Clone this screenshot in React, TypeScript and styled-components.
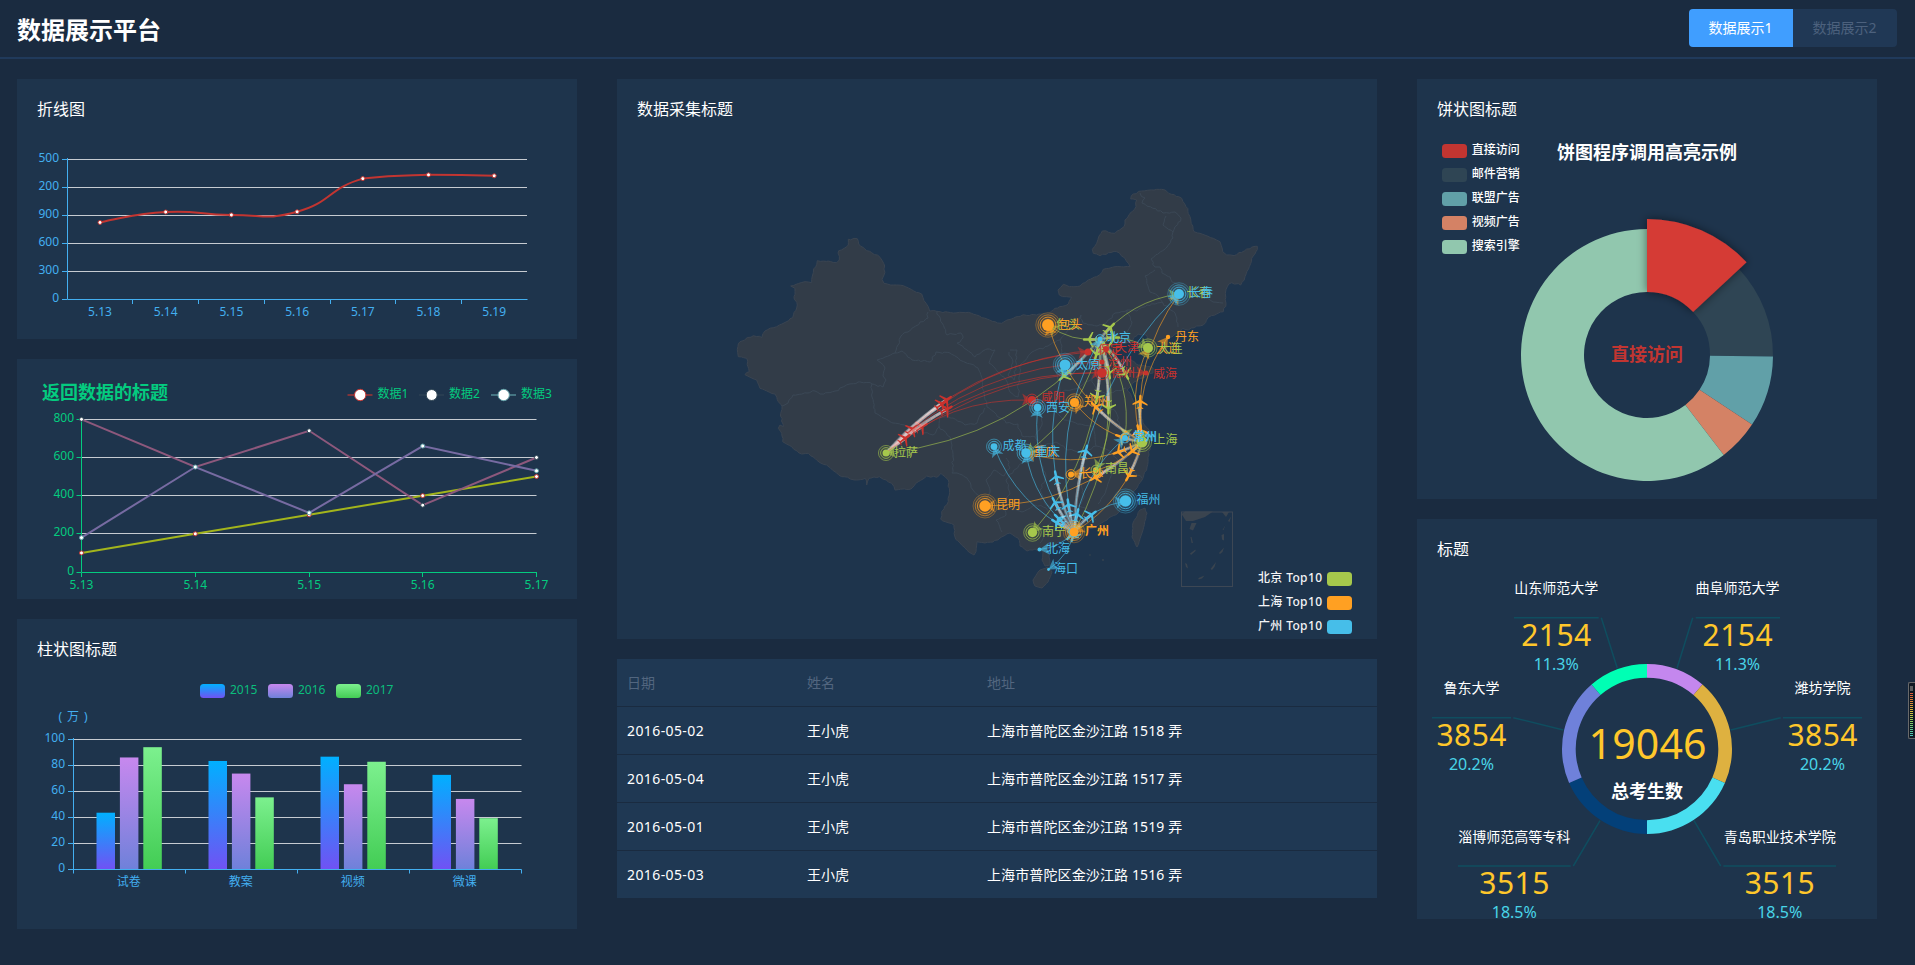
import React from "react";
import styled, { createGlobalStyle } from "styled-components";

const FONT = '"Noto Sans", "Noto Sans CJK SC", sans-serif';

const GlobalStyle = createGlobalStyle`
  *, *::before, *::after { box-sizing: border-box; }
  html, body { margin: 0; padding: 0; background: #1a2b40; }
  body { font-family: ${FONT}; color: #fff; overflow: hidden; }
`;

const Page = styled.div`
  min-height: 965px;
  background: #1a2b40;
`;

const Header = styled.header`
  display: flex;
  align-items: flex-start;
  justify-content: space-between;
  height: 59px;
  padding: 9px 18px 0 17px;
  border-bottom: 2px solid #203a5b;
`;

const Brand = styled.h1`
  margin: 0;
  font-size: 24px;
  line-height: 42px;
  font-weight: 700;
`;

const Tabs = styled.div`
  display: flex;
  border-radius: 4px;
  overflow: hidden;
`;

const Tab = styled.button<{ $active?: boolean }>`
  width: 104px;
  height: 38px;
  padding: 0 1px 0 0;
  border: 0;
  font: 400 14px/38px ${FONT};
  color: ${(p) => (p.$active ? "#fff" : "#4c617d")};
  background: ${(p) => (p.$active ? "#409eff" : "#203855")};
`;

const Main = styled.main`
  display: flex;
  align-items: flex-start;
  gap: 40px;
  padding: 20px 38px 0 17px;
`;

const Column = styled.section<{ $width: number }>`
  display: flex;
  flex-direction: column;
  flex: none;
  gap: 20px;
  width: ${(p) => p.$width}px;
`;

const Panel = styled.article<{ $height: number }>`
  display: flex;
  flex-direction: column;
  height: ${(p) => p.$height}px;
  overflow: hidden;
  background: #1e344c;
`;

const PanelTitle = styled.h2`
  flex: none;
  margin: 20px 20px 0;
  height: 20px;
  font-size: 16px;
  line-height: 20px;
  font-weight: 400;
`;

const Chart = styled.svg`
  display: block;
  flex: none;
  font-family: ${FONT};
`;

const Table = styled.div`
  display: flex;
  flex-direction: column;
  height: 239px;
  overflow: hidden;
`;

const Row = styled.div<{ $head?: boolean }>`
  display: grid;
  grid-template-columns: 180px 180px 1fr;
  flex: none;
  height: 48px;
  border-bottom: 1px solid #1a2b40;
  background: #1f3853;
  font-size: 14px;
  line-height: 47px;
  color: ${(p) => (p.$head ? "#52667f" : "#fff")};
`;

const Cell = styled.span<{ $spacing?: number }>`
  padding-left: 10px;
  letter-spacing: ${(p) => p.$spacing ?? 0}px;
`;

const Meter = styled.aside`
  position: fixed;
  right: 0;
  top: 682px;
  display: flex;
  flex-direction: column;
  gap: 1px;
  width: 7px;
  height: 57px;
  padding: 3px 1px 1px 1px;
  border: 1px solid #68696b;
  border-right: 0;
  border-radius: 2px 0 0 2px;
  background: #101923;
`;

const MeterCap = styled.i`
  flex: none;
  height: 5px;
  width: 3px;
  background: #5d5f62;
`;

const MeterBars = styled.i`
  flex: 1;
  width: 3px;
  background: repeating-linear-gradient(#101923 0 1px, transparent 1px 2px),
    linear-gradient(#e4553c, #d9893a 22%, #d5c53c 45%, #83cf63 68%, #41c4c4);
`;

/* Text placed by the vertical centre of its glyphs. */
const Label = ({
  x,
  cy,
  size = 12,
  fill,
  anchor = "start",
  weight = 400,
  length,
  children,
}: {
  x: number;
  cy: number;
  size?: number;
  fill: string;
  anchor?: "start" | "middle" | "end";
  weight?: number;
  length?: number;
  children: React.ReactNode;
}) => (
  <text x={x} y={cy + size * 0.37} fontSize={size} fill={fill} textAnchor={anchor} fontWeight={weight} textLength={length}>
    {children}
  </text>
);

type Pt = [number, number];

const BLUE = "#43aff0";
const GREEN = "#04cb7f";
const GRID = "#c6cbd1";

/* Smooth curve whose control points stay inside the vertical range of the data. */
const smoothPath = (pts: Pt[], k = 0.5) => {
  const before: Pt[] = [];
  const after: Pt[] = [];
  const ys = pts.map((p) => p[1]);
  const lo = Math.min(...ys);
  const hi = Math.max(...ys);
  const clamp = (y: number) => Math.min(hi, Math.max(lo, y));
  pts.forEach((p, i) => {
    const a = pts[i - 1];
    const b = pts[i + 1];
    if (!a || !b) {
      before.push(p);
      after.push(p);
      return;
    }
    const d1 = Math.hypot(p[0] - a[0], p[1] - a[1]);
    const d2 = Math.hypot(b[0] - p[0], b[1] - p[1]);
    const r = d2 / (d1 + d2);
    const v: Pt = [(b[0] - a[0]) * k, (b[1] - a[1]) * k];
    before.push([p[0] - v[0] * (1 - r), clamp(p[1] - v[1] * (1 - r))]);
    after.push([p[0] + v[0] * r, clamp(p[1] + v[1] * r)]);
  });
  return pts.map((p, i) => (i ? `C${after[i - 1]} ${before[i]} ${p}` : `M${p}`)).join("");
};

const VisitsChart = () => {
  const values = [820, 932, 901, 934, 1290, 1330, 1320];
  const pts = values.map((v, i): Pt => [100 + i * 65.7, 299 - (v * 140) / 1500]);
  return (
    <Chart width="560" height="220" viewBox="17 119 560 220">
      {["500", "200", "900", "600", "300", "0"].map((t, i) => {
        const y = 159.5 + i * 28;
        return (
          <g key={t}>
            {i < 5 && <path d={`M67 ${y}H527`} stroke={GRID} />}
            <path d={`M62 ${y}H67`} stroke={BLUE} />
            <Label x={59} cy={y - 2} fill={BLUE} anchor="end">{t}</Label>
          </g>
        );
      })}
      <path d="M67.5 158V299.5H527.5" stroke={BLUE} fill="none" />
      {[132.5, 198.5, 264.5, 330.5, 395.5, 461.5].map((x) => (
        <path key={x} d={`M${x} 300V304`} stroke={BLUE} />
      ))}
      {pts.map(([x], i) => (
        <Label key={i} x={x} cy={311.7} fill={BLUE} anchor="middle">{`5.${13 + i}`}</Label>
      ))}
      <path d={smoothPath(pts)} stroke="#c23531" strokeWidth="2" fill="none" />
      {pts.map(([x, y], i) => (
        <circle key={i} cx={x} cy={y} r="2" fill="#fff" stroke="#c23531" />
      ))}
    </Chart>
  );
};

const trends = [
  { name: "数据1", values: [100, 200, 300, 400, 500], line: "#a3b51c", dot: "#c23531", lx: 347.5, r: 6.2 },
  { name: "数据2", values: [800, 550, 740, 350, 600], line: "#8d587c", dot: "#2f4554", lx: 419, r: 6 },
  { name: "数据3", values: [180, 550, 310, 660, 530], line: "#776ba2", dot: "#61a0a8", lx: 491, r: 6.2 },
];

const TrendChart = () => {
  const xs = [81.5, 195.3, 309.2, 422.7, 536.5];
  const toY = (v: number) => 572 - (v * 152.7) / 800;
  return (
    <Chart width="560" height="240" viewBox="17 359 560 240">
      <Label x={42} cy={392.3} size={18} weight={700} fill={GREEN}>返回数据的标题</Label>
      {trends.map((s) => (
        <g key={s.name}>
          <path d={`M${s.lx} 395H${s.lx + 25}`} stroke={s.dot} strokeWidth="1.5" opacity="0.8" />
          <circle cx={s.lx + 12.7} cy="395" r={s.r - 0.5} fill="#fff" stroke={s.dot} />
          <Label x={s.lx + 30} cy={393.5} fill={GREEN}>{s.name}</Label>
        </g>
      ))}
      {[419.5, 457.5, 495.5, 533.5, 572.5].map((y, i) => (
        <g key={y}>
          {i < 4 && <path d={`M82 ${y}H536.5`} stroke={GRID} />}
          <path d={`M76.5 ${y}H81`} stroke={GREEN} />
          <Label x={74} cy={y - 2} fill={GREEN} anchor="end">{800 - i * 200}</Label>
        </g>
      ))}
      <path d="M81.5 419V572.5H537" stroke={GREEN} fill="none" />
      {xs.map((x, i) => (
        <g key={x}>
          <path d={`M${Math.floor(x) + 0.5} 573V577`} stroke={GREEN} />
          <Label x={x} cy={584.7} fill={GREEN} anchor="middle">{`5.${13 + i}`}</Label>
        </g>
      ))}
      {trends.map((s) => (
        <g key={s.name}>
          <polyline points={s.values.map((v, i) => `${xs[i]},${toY(v)}`).join(" ")} fill="none" stroke={s.line} strokeWidth="2" />
          {s.values.map((v, i) => (
            <circle key={i} cx={xs[i]} cy={toY(v)} r="2" fill="#fff" stroke={s.dot} />
          ))}
        </g>
      ))}
    </Chart>
  );
};

const barSeries = [
  { name: "2015", from: "#00b0ff", to: "#7052f4", values: [43.3, 83.1, 86.4, 72.4], lx: 200 },
  { name: "2016", from: "#c788ee", to: "#6f81da", values: [85.8, 73.4, 65.2, 53.9], lx: 268 },
  { name: "2017", from: "#7cf08e", to: "#43cd55", values: [93.7, 55.1, 82.5, 39.1], lx: 336 },
];

const BarChart = () => (
  <Chart width="560" height="270" viewBox="17 659 560 270">
    <defs>
      {barSeries.map((s) => (
        <linearGradient key={s.name} id={`bar${s.name}`} x1="0" y1="0" x2="0" y2="1">
          <stop offset="0" stopColor={s.from} />
          <stop offset="1" stopColor={s.to} />
        </linearGradient>
      ))}
    </defs>
    {barSeries.map((s) => (
      <g key={s.name}>
        <rect x={s.lx} y="684" width="25" height="14" rx="3.5" fill={`url(#bar${s.name})`} />
        <Label x={s.lx + 30} cy={689.7} fill="#0bbd7c">{s.name}</Label>
      </g>
    ))}
    <Label x={58.5} cy={716.7} fill={BLUE} length={29}>( 万 )</Label>
    {[100, 80, 60, 40, 20, 0].map((v, i) => {
      const y = 739.5 + i * 26;
      return (
        <g key={v}>
          {v > 0 && <path d={`M74 ${y}H521.5`} stroke={GRID} />}
          <path d={`M68 ${y}H73`} stroke={BLUE} />
          <Label x={65} cy={y - 2} fill={BLUE} anchor="end">{v}</Label>
        </g>
      );
    })}
    {barSeries.map((s, k) =>
      s.values.map((v, i) => (
        <rect key={s.name + i} x={96.5 + k * 23.4 + i * 112} y={869 - v * 1.3} width="18.5" height={v * 1.3} fill={`url(#bar${s.name})`} />
      ))
    )}
    <path d="M73.5 738V873.5M73.5 869.5H521.5V873.5M185.5 870V873.5M297.5 870V873.5M409.5 870V873.5" stroke={BLUE} fill="none" />
    {["试卷", "教案", "视频", "微课"].map((t, i) => (
      <Label key={t} x={128.8 + i * 112} cy={881.7} fill={BLUE} anchor="middle">{t}</Label>
    ))}
  </Chart>
);

/* ---------- map ---------- */

const mainland: number[] = [
  848.3, 239.3, 857.3, 238.7, 858.7, 244, 866.7, 250.7, 871.7, 252.7, 880, 257.3, 884.7, 266, 884, 275, 882, 279.3, 884, 283.3,
  893.3, 285, 903.3, 285.7, 913.3, 290.7, 921.7, 294, 924, 300.7, 928.3, 306.7, 929.7, 311, 940, 311.7, 953.3, 313, 968.3, 312.3,
  976.7, 315, 981.7, 317.7, 995, 321.7, 1001.7, 323.3, 1013.3, 318.3, 1023.3, 314.7, 1036.7, 315, 1048.3, 314, 1055, 308.3,
  1068.3, 304, 1071.7, 297.3, 1066.7, 296.7, 1059.3, 295, 1058, 290, 1063.3, 284.3, 1069.3, 286.7, 1080, 286, 1088.3, 280,
  1096.7, 276.7, 1103.3, 269.3, 1115, 266.7, 1130, 266.7, 1125, 258.3, 1116.7, 251.7, 1108.3, 252.7, 1100, 255.7, 1093.3, 253.3,
  1092.3, 249.3, 1096.7, 243.3, 1099, 236, 1102.3, 231, 1115, 233.3, 1124, 226.7, 1125, 220, 1130, 213.3, 1136, 206.7, 1136.7, 200,
  1130.7, 199, 1133.3, 194, 1141.7, 191, 1156.7, 189.3, 1165, 190, 1171.7, 194.3, 1181.7, 198.3, 1186, 206.7, 1190, 216.7,
  1194, 231.7, 1200, 233.3, 1213.3, 238.3, 1220, 241.7, 1222.7, 251.7, 1226.7, 255, 1236.7, 254.7, 1246.7, 249, 1257.3, 246.3,
  1256, 251.7, 1251.7, 258.3, 1249.3, 266.7, 1245, 276.7, 1240.7, 285, 1231.7, 282.7, 1227.3, 286.7, 1225.3, 293.3, 1226, 303.3,
  1223.3, 311.7, 1216.7, 314, 1208.3, 317.3, 1203.3, 325, 1196.7, 326, 1188.3, 330, 1182.7, 328.3, 1180, 331.7, 1168, 339,
  1157, 346, 1147, 354, 1143, 353, 1148, 343, 1146, 335, 1138, 334, 1131, 342, 1121, 345, 1115, 351, 1116, 358, 1122, 362,
  1130, 359, 1136, 364, 1145, 366, 1153, 368, 1153, 373, 1143, 378, 1134, 382, 1127, 390, 1133, 400, 1140, 412, 1143, 423,
  1151, 432, 1148, 438, 1141, 442, 1150, 446, 1149, 455, 1147, 467, 1142, 480, 1135, 490, 1127, 503, 1118, 513, 1107, 520,
  1093, 528, 1080, 534, 1068, 539, 1057, 543, 1048, 548, 1049, 557, 1050, 565, 1045, 566, 1042, 560, 1043, 552, 1035, 549,
  1027, 551, 1020, 546, 1018, 538, 1010, 533, 1000, 538, 993, 542, 985, 543, 977, 541.7, 976, 551.7, 974, 555, 966.7, 550,
  960, 543, 955, 537, 954, 525, 948, 522.7, 940.7, 519, 941.7, 511.7, 946.7, 505, 949.3, 495, 948.3, 480, 945, 476.7,
  940.7, 473.3, 936.7, 477.3, 926.7, 476, 918.3, 481.7, 910, 489.3, 895, 490, 891.7, 483.3, 883.3, 479.3, 879.3, 476.7,
  869, 478.3, 866.7, 485, 865.3, 478.3, 856.7, 480, 841.7, 476.7, 835, 471.7, 826.7, 465, 820, 462.7, 808.3, 453.3, 801.7, 454,
  791.7, 446.7, 782.7, 441.7, 781.7, 433.3, 778.3, 428.3, 780, 425, 783.3, 426.7, 780.7, 413.3, 782, 406.7, 778.3, 401.7,
  775, 394, 760, 388.3, 756.7, 380, 745, 374.7, 749.3, 371.7, 746.7, 358.3, 738.3, 356.7, 737.3, 349.3, 740, 341.7, 753.3, 335.7,
  761.7, 337.7, 765, 331, 776.7, 326.7, 792.7, 317.7, 797.3, 305, 794, 296.7, 795, 288.3, 790.7, 286, 805, 281.7, 811.7, 282.7,
  813.3, 272.7, 817.3, 260.7, 836.7, 262.7, 839.3, 260, 838.7, 250.7, 848.3, 245,
];
const hainan = [1035, 577, 1040, 570, 1048, 567, 1052, 572, 1048, 582, 1042, 588, 1035, 586, 1033, 580];
const taiwan = [1145, 508, 1147, 513, 1142, 533, 1137, 547, 1132, 537, 1133, 523, 1140, 510];

const borders: number[][] = [
  [782, 406, 788, 403, 793, 395, 807, 393, 815, 391, 820, 394, 835, 391, 845, 386, 858, 382, 872, 384, 883, 387, 886, 380, 883, 376, 885, 368, 881, 363, 877, 360, 895, 353, 898, 345, 901, 336, 908, 332, 920, 322, 928, 318, 928, 312],
  [937, 311, 942, 323, 947, 335, 961, 333, 963, 338, 957, 343, 967, 350, 975, 357, 987, 349, 995, 350, 989, 363, 997, 371, 1006, 380, 1010, 392, 1018, 397],
  [895, 353, 902, 351, 912, 360, 930, 362, 936, 352, 950, 353, 962, 361, 978, 368, 983, 380, 982, 388, 987, 407, 994, 412, 1006, 423, 1018, 424],
  [872, 384, 872, 397, 875, 413, 893, 423, 907, 426, 920, 427, 923, 433, 933, 435, 939, 427, 940, 417, 953, 418, 965, 425, 977, 423, 985, 408],
  [939, 426, 950, 437, 953, 457, 952, 473, 957, 473, 967, 478, 973, 490, 984, 505, 990, 492, 986, 480, 994, 470, 1004, 476, 1010, 468, 1006, 458],
  [1018, 424, 1022, 436, 1035, 437, 1042, 446, 1036, 455, 1024, 462, 1014, 470, 1006, 480, 1010, 494, 1002, 504, 1006, 515, 996, 520, 1002, 532],
  [1010, 508, 1022, 512, 1035, 505, 1046, 508, 1052, 518, 1046, 530, 1040, 543],
  [1042, 446, 1040, 462, 1046, 476, 1040, 490, 1046, 505, 1060, 512, 1072, 505, 1086, 508, 1096, 520],
  [1080, 455, 1086, 468, 1080, 482, 1084, 498, 1078, 506],
  [1042, 446, 1056, 442, 1068, 450, 1082, 452, 1096, 446, 1108, 450, 1118, 460, 1112, 474, 1106, 490, 1098, 504],
  [1118, 460, 1130, 470, 1142, 478],
  [1035, 437, 1042, 425, 1040, 412, 1052, 408, 1064, 420, 1080, 424, 1094, 428, 1096, 446],
  [1052, 408, 1060, 392, 1056, 372, 1062, 352, 1060, 340, 1048, 346, 1032, 352, 1020, 365, 1018, 397],
  [1060, 392, 1078, 388, 1092, 378, 1100, 362, 1114, 356],
  [1092, 378, 1096, 390, 1108, 394, 1126, 388],
  [1096, 390, 1104, 404, 1116, 412, 1120, 428, 1132, 440],
  [1081, 315, 1083, 323, 1097, 326, 1106, 323, 1115, 313, 1127, 310, 1137, 311, 1147, 305, 1163, 303, 1158, 296, 1150, 292, 1148, 286, 1145, 276, 1155, 270],
  [1081, 315, 1078, 327, 1068, 330, 1060, 340],
  [1140, 193, 1145, 198, 1142, 203, 1163, 213, 1175, 212, 1181, 218, 1173, 232, 1163, 225, 1166, 216],
  [1173, 232, 1173, 238, 1167, 247, 1151, 259, 1155, 267, 1160, 267, 1162, 273, 1170, 277, 1172, 282, 1183, 287, 1200, 295, 1213, 302, 1223, 303],
  [1163, 303, 1175, 313, 1178, 327],
  [1127, 310, 1132, 322, 1126, 334, 1131, 342],
  [1009, 352, 1013, 362, 1008, 375, 1014, 380, 1017, 350, 1010, 350],
];

/* Adds small deterministic jags so that coasts and borders look surveyed. */
const rugged = (flat: number[], amp: number, closed: boolean) => {
  const pts: Pt[] = [];
  for (let i = 0; i < flat.length; i += 2) pts.push([flat[i], flat[i + 1]]);
  let seed = 7;
  const rnd = () => {
    seed = (seed * 16807) % 2147483647;
    return seed / 2147483647 - 0.5;
  };
  const out: string[] = [];
  pts.forEach((p, i) => {
    out.push(p.map((n) => n.toFixed(1)).join(","));
    const q = pts[i + 1] ?? (closed ? pts[0] : null);
    if (!q) return;
    const steps = Math.floor(Math.hypot(q[0] - p[0], q[1] - p[1]) / 2.6);
    for (let s = 1; s < steps; s++) {
      const t = s / steps;
      out.push(`${(p[0] + (q[0] - p[0]) * t + rnd() * amp).toFixed(1)},${(p[1] + (q[1] - p[1]) * t + rnd() * amp).toFixed(1)}`);
    }
  });
  return "M" + out.join("L") + (closed ? "Z" : "");
};

const LIME = "#a6c84c";
const ORANGE = "#ffa022";
const SKY = "#46bee9";
const RED = "#c9322d";

const PLANE =
  "M1705.06,1318.313v-89.254l-319.9-221.799l0.073-208.063c0.521-84.662-26.629-121.796-63.961-121.491c-37.332-0.305-64.482,36.829-63.961,121.491l0.073,208.063l-319.9,221.799v89.254l330.343-157.288l12.238,241.308l-134.449,92.931l0.531,42.034l175.125-42.917l175.125,42.917l0.531-42.034l-134.449-92.931l12.238-241.308L1705.06,1318.313z";

const at: Record<string, Pt> = {
  长春: [1179, 294], 包头: [1048, 325], 北京: [1100, 339], 丹东: [1168, 337], 大连: [1148, 348], 保定: [1088, 352],
  天津: [1106, 349], 沧州: [1102, 362], 德州: [1102, 373], 威海: [1146, 373], 太原: [1065, 365], 咸阳: [1032, 400],
  西安: [1037.6, 407.5], 郑州: [1074.5, 402.5], 常州: [1125, 438], 上海: [1142, 442], 成都: [994, 446.6],
  重庆: [1026, 453], 拉萨: [886, 453], 长沙: [1071, 474.5], 南昌: [1096, 470], 昆明: [985, 506], 福州: [1125.5, 501],
  南宁: [1032.5, 532.5], 广州: [1074, 532], 北海: [1039.5, 549.5], 海口: [1048.5, 569.5],
};

const routes: { from: string; color: string; to: [string, number][] }[] = [
  {
    from: "拉萨", color: RED,
    to: [["咸阳", 0.27], ["保定", 0.34], ["天津", 0.29], ["沧州", 0.14], ["德州", 0.31], ["威海", 0.08]],
  },
  {
    from: "北京", color: LIME,
    to: [["上海", 0.37], ["广州", 0.34], ["大连", 0.25], ["南宁", 0.27], ["南昌", 0.25], ["拉萨", 0.2], ["长春", 0.15], ["包头", 0.17], ["重庆", 0.1], ["常州", 0.1]],
  },
  {
    from: "上海", color: ORANGE,
    to: [["包头", 0.37], ["昆明", 0.33], ["广州", 0.3], ["郑州", 0.25], ["长春", 0.25], ["重庆", 0.2], ["长沙", 0.15], ["丹东", 0.09], ["大连", 0.11]],
  },
  {
    from: "广州", color: SKY,
    to: [["福州", 0.38], ["太原", 0.33], ["长春", 0.3], ["重庆", 0.2], ["西安", 0.25], ["成都", 0.15], ["常州", 0.15], ["北京", 0.13], ["北海", 0.08], ["海口", 0.06]],
  },
];

const Route = ({ a, b, t, color }: { a: Pt; b: Pt; t: number; color: string }) => {
  const c: Pt = [(a[0] + b[0]) / 2 - (a[1] - b[1]) * 0.2, (a[1] + b[1]) / 2 - (b[0] - a[0]) * 0.2];
  const pos = (u: number): Pt => [
    (1 - u) ** 2 * a[0] + 2 * u * (1 - u) * c[0] + u * u * b[0],
    (1 - u) ** 2 * a[1] + 2 * u * (1 - u) * c[1] + u * u * b[1],
  ];
  const heading = (u: number) => {
    const dx = 2 * (1 - u) * (c[0] - a[0]) + 2 * u * (b[0] - c[0]);
    const dy = 2 * (1 - u) * (c[1] - a[1]) + 2 * u * (b[1] - c[1]);
    return (Math.atan2(dy, dx) * 180) / Math.PI + 90;
  };
  const p = pos(t);
  const n = 12;
  return (
    <g>
      <path d={`M${a}Q${c} ${b}`} fill="none" stroke={color} strokeWidth="1" opacity="0.6" />
      <path d="M0 0L6.2 10L0 7.5L-6.2 10Z" fill={color} opacity="0.6" transform={`translate(${b}) rotate(${heading(1)})`} />
      {Array.from({ length: n }, (_, i) => (
        <path key={i} d={`M${pos((t * i) / n)}L${pos((t * (i + 1)) / n)}`} stroke="#fff" strokeWidth="3" opacity={0.12 + (0.55 * i) / n} />
      ))}
      <path d={PLANE} fill={color} transform={`translate(${p}) rotate(${heading(t)}) scale(.0195 .0165) translate(-1321.6 -1132)`} />
    </g>
  );
};

const cities: { name: string; color: string; r: number; halo?: number; lx: number; ly: number; under?: string; bold?: boolean }[] = [
  { name: "保定", color: RED, r: 3.5, lx: 1098, ly: 350 },
  { name: "天津", color: RED, r: 3, lx: 1115, ly: 347.5 },
  { name: "沧州", color: RED, r: 2.5, lx: 1108, ly: 362 },
  { name: "德州", color: RED, r: 4.8, halo: 1, lx: 1111, ly: 373 },
  { name: "威海", color: RED, r: 2.5, lx: 1153, ly: 374 },
  { name: "咸阳", color: RED, r: 4, halo: 1, lx: 1041, ly: 397.5 },
  { name: "拉萨", color: LIME, r: 3.5, halo: 2, lx: 894, ly: 453 },
  { name: "大连", color: LIME, r: 5, halo: 2, lx: 1158.5, ly: 348.5, under: ORANGE },
  { name: "上海", color: LIME, r: 5.5, halo: 2, lx: 1153.5, ly: 440 },
  { name: "南昌", color: LIME, r: 3, halo: 1, lx: 1105, ly: 468.5 },
  { name: "南宁", color: LIME, r: 4.7, halo: 2, lx: 1042, ly: 531.7 },
  { name: "包头", color: ORANGE, r: 6, halo: 3, lx: 1058.5, ly: 324.5, under: LIME },
  { name: "丹东", color: ORANGE, r: 2.2, lx: 1175, ly: 336.5 },
  { name: "郑州", color: ORANGE, r: 4.6, halo: 2, lx: 1084, ly: 401.5 },
  { name: "长沙", color: ORANGE, r: 3, halo: 1, lx: 1080, ly: 473.5 },
  { name: "昆明", color: ORANGE, r: 5.7, halo: 3, lx: 996, ly: 504.7 },
  { name: "广州", color: ORANGE, r: 4.5, halo: 3, lx: 1085, ly: 531, bold: true },
  { name: "长春", color: SKY, r: 5, halo: 3, lx: 1189, ly: 293, under: LIME },
  { name: "北京", color: SKY, r: 2.5, halo: 1, lx: 1107, ly: 337.5 },
  { name: "太原", color: SKY, r: 5.5, halo: 3, lx: 1076, ly: 364.5 },
  { name: "西安", color: SKY, r: 3.8, halo: 2, lx: 1046, ly: 407.2 },
  { name: "常州", color: SKY, r: 3, halo: 1, lx: 1133, ly: 437, bold: true },
  { name: "成都", color: SKY, r: 3.4, halo: 2, lx: 1002.5, ly: 446 },
  { name: "重庆", color: SKY, r: 4.8, halo: 2, lx: 1036, ly: 452, under: ORANGE },
  { name: "福州", color: SKY, r: 5.8, halo: 3, lx: 1136.5, ly: 499.7 },
  { name: "北海", color: SKY, r: 2, lx: 1046, ly: 549 },
  { name: "海口", color: SKY, r: 1.4, lx: 1054, ly: 568.5 },
];

const FlightMap = () => (
  <Chart width="760" height="520" viewBox="617 119 760 520">
    <g fill="#323c48" stroke="#3a4451" strokeWidth="1" strokeLinejoin="round">
      <path d={rugged(mainland, 1.6, true)} />
      <path d={rugged(hainan, 1, true)} />
      <path d={rugged(taiwan, 1, true)} />
    </g>
    <g fill="none" stroke="#3b4856" strokeWidth="1" strokeLinejoin="round">
      {borders.map((b, i) => (
        <path key={i} d={rugged(b, 2.2, false)} />
      ))}
    </g>
    <g fill="#3a444f">
      <path d="M1181.5 514L1185 511.5H1213L1205 517L1193 521H1186Z" />
      <path d="M1222 512H1229L1226 517Z" />
      <path d="M1191.5 523L1196.500 523L1193 530.500L1189.500 529ZM1190.500 537L1191.500 537L1193 543H1191.500ZM1190 553.500L1195.500 549.500V551L1191 555ZM1185 563L1187 564L1188 568.500L1186 567ZM1198.500 578L1204.500 575.500L1202 578.500L1198.500 579.500ZM1210.500 569L1216 562L1214.500 567L1212 570ZM1219 553L1224 547.500L1222.500 552L1220 554ZM1221.500 535L1224 534V540.500L1222 539.500ZM1222.500 530L1225.500 525L1223.500 530ZM1228 521L1231 516.500L1229.500 522Z" />
      <circle cx="1090" cy="555" r="0.8" />
      <circle cx="1103" cy="560" r="0.9" />
    </g>
    <rect x="1181.500" y="512" width="51" height="74.500" fill="none" stroke="#3d4754" />
    {routes.map((g) => g.to.map(([to, t]) => <Route key={g.from + to} a={at[g.from]} b={at[to]} t={t} color={g.color} />))}
    {cities.map((c) => {
      const [x, y] = at[c.name];
      return (
        <g key={c.name}>
          {c.halo &&
            Array.from({ length: c.halo }, (_, i) => (
              <circle key={i} cx={x} cy={y} r={c.r + 1.9 + i * 2.2} fill={c.color} fillOpacity="0.06" stroke={c.color} strokeOpacity={0.75 - i * 0.22} />
            ))}
          <circle cx={x} cy={y} r={c.r} fill={c.color} />
          {c.under && <Label x={c.lx - 2.5} cy={c.ly} fill={c.under}>{c.name}</Label>}
          <Label x={c.lx} cy={c.ly} fill={c.color} weight={c.bold ? 700 : 400}>{c.name}</Label>
        </g>
      );
    })}
    {[["北京 Top10", LIME], ["上海 Top10", ORANGE], ["广州 Top10", SKY]].map(([t, color], i) => (
      <g key={t}>
        <Label x={1258} cy={577.5 + i * 24} fill="#f4f5f7" weight={500} length={64}>{t}</Label>
        <rect x="1327" y={572 + i * 24} width="25" height="14" rx="3.5" fill={color} />
      </g>
    ))}
  </Chart>
);

/* ---------- pies ---------- */

const sector = (cx: number, cy: number, r0: number, r1: number, a0: number, a1: number) => {
  const pt = (r: number, a: number) => `${(cx + r * Math.sin(a)).toFixed(2)} ${(cy - r * Math.cos(a)).toFixed(2)}`;
  const big = a1 - a0 > Math.PI ? 1 : 0;
  return `M${pt(r1, a0)}A${r1} ${r1} 0 ${big} 1 ${pt(r1, a1)}L${pt(r0, a1)}A${r0} ${r0} 0 ${big} 0 ${pt(r0, a0)}Z`;
};

const withAngles = <T extends { value: number }>(items: T[]) => {
  const total = items.reduce((s, i) => s + i.value, 0);
  let acc = 0;
  return items.map((i) => {
    const a0 = (acc / total) * Math.PI * 2;
    acc += i.value;
    return { ...i, a0, a1: (acc / total) * Math.PI * 2 };
  });
};

const sources = withAngles([
  { name: "直接访问", value: 335, color: "#c23531" },
  { name: "邮件营销", value: 310, color: "#2f4554" },
  { name: "联盟广告", value: 234, color: "#61a0a8" },
  { name: "视频广告", value: 135, color: "#d48265" },
  { name: "搜索引擎", value: 1548, color: "#91c7ae" },
]);

const SourcePie = () => (
  <Chart width="460" height="380" viewBox="1417 119 460 380">
    <defs>
      <filter id="lift" x="-30%" y="-30%" width="160%" height="160%">
        <feDropShadow dx="0" dy="0" stdDeviation="5" floodColor="#000" floodOpacity="0.5" />
      </filter>
    </defs>
    {sources.map((s, i) => (
      <g key={s.name}>
        <rect x="1442" y={144 + i * 24} width="25" height="14" rx="3.5" fill={s.color} />
        <Label x={1471.7} cy={149.7 + i * 24} weight={500} fill="#fff">{s.name}</Label>
      </g>
    ))}
    <Label x={1647} cy={152.5} size={18} weight={700} fill="#fff" anchor="middle">饼图程序调用高亮示例</Label>
    {sources.slice(1).map((s) => (
      <path key={s.name} d={sector(1647, 355, 63, 126, s.a0, s.a1)} fill={s.color} />
    ))}
    <path d={sector(1647, 355, 63, 136, sources[0].a0, sources[0].a1)} fill="#d53a35" filter="url(#lift)" />
    <Label x={1647} cy={354} size={18} weight={700} fill="#c23531" anchor="middle">直接访问</Label>
  </Chart>
);

const schools = withAngles([
  { name: "曲阜师范大学", value: 2154, pct: "11.3%", color: "#c487ee", cx: 1737.6, y: 617.7, x0: 1695.7, x1: 1780, leader: "1692.7 617.7L1677 668.3" },
  { name: "潍坊学院", value: 3854, pct: "20.2%", color: "#deb140", cx: 1822.5, y: 717.7, x0: 1783, x1: 1862, leader: "1780.7 717.7L1730.7 730" },
  { name: "青岛职业技术学院", value: 3515, pct: "18.5%", color: "#49dff0", cx: 1779.7, y: 866, x0: 1723.3, x1: 1836, leader: "1720.7 866L1694 820.7" },
  { name: "淄博师范高等专科", value: 3515, pct: "18.5%", color: "#034079", cx: 1514.3, y: 866, x0: 1458, x1: 1570.7, leader: "1573.3 866L1600 820.7" },
  { name: "鲁东大学", value: 3854, pct: "20.2%", color: "#6f81da", cx: 1471.5, y: 717.7, x0: 1432, x1: 1511, leader: "1513.3 717.7L1563.3 730" },
  { name: "山东师范大学", value: 2154, pct: "11.3%", color: "#00ffb4", cx: 1556.2, y: 617.7, x0: 1514, x1: 1598.7, leader: "1601.3 617.7L1617.3 668.3" },
]);

const SchoolRing = () => (
  <Chart width="460" height="360" viewBox="1417 559 460 360">
    {schools.map((s) => (
      <g key={s.name}>
        <path d={`M${s.leader}M${s.x0} ${s.y}H${s.x1}`} stroke="#0f4d5f" strokeWidth="1.5" fill="none" />
        <path d={sector(1647, 749, 71.3, 85, s.a0, s.a1)} fill={s.color} />
        <Label x={s.cx} cy={s.y - 29.5} size={14} fill="#fff" anchor="middle">{s.name}</Label>
        <Label x={s.cx} cy={s.y + 16.8} size={30} fill="#ffc72b" anchor="middle" length={70}>{s.value}</Label>
        <Label x={s.cx} cy={s.y + 46.3} size={16} fill="#49d5e8" anchor="middle">{s.pct}</Label>
      </g>
    ))}
    <Label x={1647.5} cy={743.5} size={41} fill="#ffc72b" anchor="middle" length={118}>19046</Label>
    <Label x={1647} cy={791} size={18} weight={700} fill="#fff" anchor="middle">总考生数</Label>
  </Chart>
);

const people = [
  ["2016-05-02", "王小虎", "上海市普陀区金沙江路 1518 弄"],
  ["2016-05-04", "王小虎", "上海市普陀区金沙江路 1517 弄"],
  ["2016-05-01", "王小虎", "上海市普陀区金沙江路 1519 弄"],
  ["2016-05-03", "王小虎", "上海市普陀区金沙江路 1516 弄"],
];

export default function App() {
  return (
    <Page>
      <GlobalStyle />
      <Header>
        <Brand>数据展示平台</Brand>
        <Tabs>
          <Tab $active>数据展示1</Tab>
          <Tab>数据展示2</Tab>
        </Tabs>
      </Header>
      <Main>
        <Column $width={560}>
          <Panel $height={260}>
            <PanelTitle>折线图</PanelTitle>
            <VisitsChart />
          </Panel>
          <Panel $height={240}>
            <TrendChart />
          </Panel>
          <Panel $height={310}>
            <PanelTitle>柱状图标题</PanelTitle>
            <BarChart />
          </Panel>
        </Column>
        <Column $width={760}>
          <Panel $height={560}>
            <PanelTitle>数据采集标题</PanelTitle>
            <FlightMap />
          </Panel>
          <Table>
            <Row $head>
              <Cell>日期</Cell>
              <Cell>姓名</Cell>
              <Cell>地址</Cell>
            </Row>
            {people.map(([date, name, address]) => (
              <Row key={date}>
                <Cell $spacing={0.4}>{date}</Cell>
                <Cell>{name}</Cell>
                <Cell $spacing={0.12}>{address}</Cell>
              </Row>
            ))}
          </Table>
        </Column>
        <Column $width={460}>
          <Panel $height={420}>
            <PanelTitle>饼状图标题</PanelTitle>
            <SourcePie />
          </Panel>
          <Panel $height={400}>
            <PanelTitle>标题</PanelTitle>
            <SchoolRing />
          </Panel>
        </Column>
      </Main>
      <Meter>
        <MeterCap />
        <MeterBars />
      </Meter>
    </Page>
  );
}
